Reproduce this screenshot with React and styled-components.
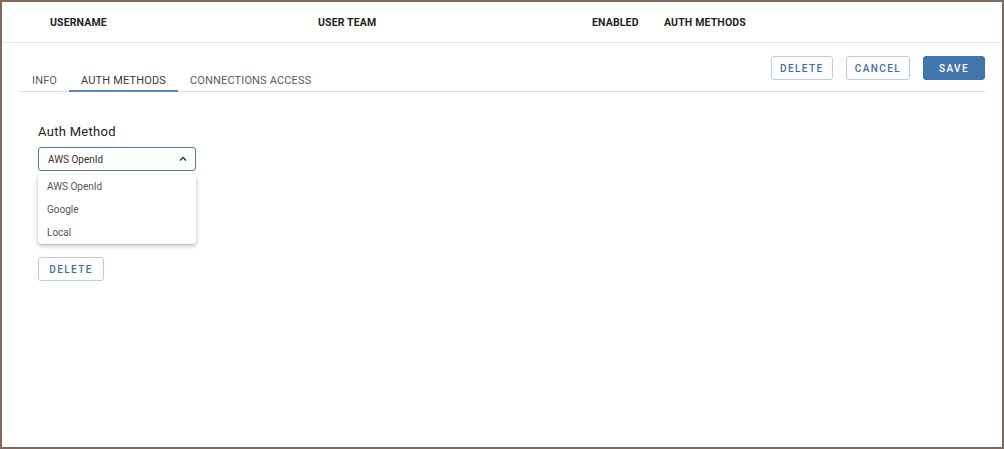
import React, {useState} from "react";
import styled, {createGlobalStyle} from "styled-components";

const GlobalStyle = createGlobalStyle`
    html, body {
        margin: 0;
        padding: 0;
        background: #ffffff;
    }
    body {
        font-family: Roboto, "Noto Sans", "Liberation Sans", sans-serif;
        color: #222;
    }
    * {
        box-sizing: border-box;
    }
`;

const Frame = styled.div`
      width: 1004px;
      height: 449px;
      border: 2px solid #806a5d;
      background: #ffffff;
      display: flex;
      flex-direction: column;
      overflow: hidden;
    `;

const HeaderRow = styled.div`
      height: 41px;
      display: grid;
      grid-template-columns: 268px 274px 72px 1fr;
      align-items: center;
      padding-left: 48px;
      border-bottom: 1px solid #e6e6e6;
    `;

const HeaderCell = styled.div`
      font-size: 10.5px;
      font-weight: 700;
      letter-spacing: 0.15px;
      color: #1f1f1f;
      text-transform: uppercase;
    `;

const Content = styled.div`
      padding: 0 17px 0 18px;
    `;

const TabBar = styled.div`
      display: flex;
      align-items: flex-end;
      justify-content: space-between;
      border-bottom: 1px solid #dedede;
      padding-top: 13px;
    `;

const Tabs = styled.div`
      display: flex;
    `;

const Tab = styled.button`
      background: none;
      border: none;
      margin: 0;
      font-family: inherit;
      font-size: 11px;
      letter-spacing: 0.15px;
      text-transform: uppercase;
      color: ${props => props.active ? '#3a3a3a' : '#5a5a5a'};
      padding: 3px 12px 0 12px;
      height: 24px;
      border-bottom: 2px solid ${props => props.active ? '#5a86bb' : 'transparent'};
      margin-bottom: -1px;
      cursor: pointer;
    `;

const Actions = styled.div`
      display: flex;
      gap: 13px;
      margin-bottom: 11px;
    `;

const Button = styled.button`
      height: 24px;
      min-width: ${props => props.wide ? '66px' : '62px'};
      padding: 0 8px;
      border-radius: 3px;
      font-family: inherit;
      font-size: 10px;
      font-weight: 500;
      letter-spacing: 1.4px;
      text-transform: uppercase;
      cursor: pointer;
      border: 1px solid ${props => props.primary ? '#3c72ab' : '#bccde2'};
      background: ${props => props.primary ? '#4176ae' : '#ffffff'};
      color: ${props => props.primary ? '#ffffff' : '#3f6fa6'};
    `;

const Section = styled.div`
      padding: 32px 0 0 18px;
      display: flex;
      flex-direction: column;
      align-items: flex-start;
    `;

const Label = styled.div`
      font-size: 13px;
      letter-spacing: 0.3px;
      color: #222;
      margin-bottom: 8px;
    `;

const SelectWrap = styled.div`
      position: relative;
      width: 158px;
    `;

const SelectBox = styled.div`
      height: 24px;
      border: 1px solid #4a7bb4;
      border-radius: 3px;
      display: flex;
      align-items: center;
      justify-content: space-between;
      padding: 0 8px 0 9px;
      font-size: 10px;
      color: #333;
      cursor: pointer;
    `;

const Menu = styled.ul`
      position: absolute;
      top: 28px;
      left: 0;
      width: 158px;
      margin: 0;
      padding: 0;
      list-style: none;
      background: #ffffff;
      border-radius: 3px;
      box-shadow: 0 2px 5px rgba(0, 0, 0, 0.22), 0 1px 2px rgba(0, 0, 0, 0.12);
      z-index: 2;
    `;

const MenuItem = styled.li`
      height: 23px;
      display: flex;
      align-items: center;
      padding-left: 9px;
      font-size: 10px;
      color: #555;
      cursor: pointer;
    `;

const BottomActions = styled.div`
      margin-top: 86px;
    `;

const methods = ["AWS OpenId", "Google", "Local"];

export default function App() {
    const [activeTab, setActiveTab] = useState("auth");
    const [selected, setSelected] = useState("AWS OpenId");

    return (
        <>
            <GlobalStyle/>
            <Frame>
                <HeaderRow>
                    <HeaderCell>Username</HeaderCell>
                    <HeaderCell>User Team</HeaderCell>
                    <HeaderCell>Enabled</HeaderCell>
                    <HeaderCell>Auth Methods</HeaderCell>
                </HeaderRow>
                <Content>
                    <TabBar>
                        <Tabs>
                            <Tab active={activeTab === "info"} onClick={() => setActiveTab("info")}>Info</Tab>
                            <Tab active={activeTab === "auth"} onClick={() => setActiveTab("auth")}>Auth Methods</Tab>
                            <Tab active={activeTab === "conn"} onClick={() => setActiveTab("conn")}>Connections Access</Tab>
                        </Tabs>
                        <Actions>
                            <Button>Delete</Button>
                            <Button>Cancel</Button>
                            <Button primary>Save</Button>
                        </Actions>
                    </TabBar>
                    <Section>
                        <Label>Auth Method</Label>
                        <SelectWrap>
                            <SelectBox>
                                <span>{selected}</span>
                                <svg width="8" height="6" viewBox="0 0 8 6">
                                    <path d="M1 4.5 L4 1.5 L7 4.5" fill="none" stroke="#333" strokeWidth="1.4"/>
                                </svg>
                            </SelectBox>
                            <Menu>
                                {methods.map(m => (
                                    <MenuItem key={m} onClick={() => setSelected(m)}>{m}</MenuItem>
                                ))}
                            </Menu>
                        </SelectWrap>
                        <BottomActions>
                            <Button wide>Delete</Button>
                        </BottomActions>
                    </Section>
                </Content>
            </Frame>
        </>
    );
}
